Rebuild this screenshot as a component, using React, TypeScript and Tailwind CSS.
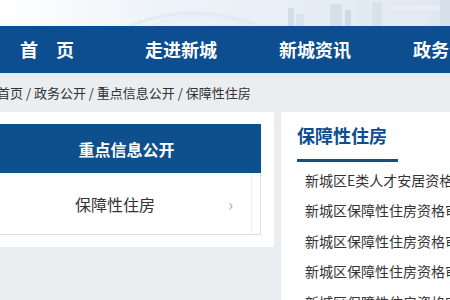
import React from "react";

const font = { fontFamily: '"Noto Sans CJK SC", "Noto Sans", sans-serif' };

function City() {
  return (
    <svg width="450" height="26" viewBox="0 0 450 26" className="absolute left-0 top-0">
      <defs>
        <linearGradient id="fade" x1="0" x2="1" y1="0" y2="0">
          <stop offset="0" stopColor="#ffffff" stopOpacity="1" />
          <stop offset="0.35" stopColor="#eef3f8" stopOpacity="1" />
          <stop offset="1" stopColor="#dfe8f1" stopOpacity="1" />
        </linearGradient>
      </defs>
      <rect x="0" y="0" width="450" height="26" fill="url(#fade)" />
      <path d="M130 26 Q190 0 260 26" stroke="#e3eaf2" strokeWidth="3" fill="none" />
      <path d="M150 26 Q200 6 250 26" stroke="#e8eef4" strokeWidth="2" fill="none" />
      <rect x="288" y="8" width="6" height="18" fill="#d3dde8" />
      <rect x="296" y="14" width="8" height="12" fill="#dbe4ee" />
      <rect x="330" y="4" width="12" height="22" fill="#d6e0ea" />
      <rect x="345" y="10" width="6" height="16" fill="#cfdae6" />
      <rect x="355" y="0" width="14" height="26" fill="#e1e9f1" />
      <rect x="372" y="2" width="10" height="24" fill="#d9e2ec" />
      <rect x="390" y="6" width="50" height="4" fill="#e7eef5" />
      <rect x="398" y="12" width="30" height="14" fill="#e3eaf2" />
      <rect x="440" y="0" width="10" height="26" fill="#d7e1eb" />
    </svg>
  );
}

export default function App() {
  const items = [
    "新城区E类人才安居资格认定名单公示",
    "新城区保障性住房资格审核结果公示",
    "新城区保障性住房资格审核结果公示",
    "新城区保障性住房资格审核结果公示",
    "新城区保障性住房资格审核结果公示",
  ];
  return (
    <div className="w-[450px] h-[300px] overflow-hidden bg-[#ebeef1] flex flex-col" style={font}>
      <div className="relative h-[26px] shrink-0 bg-white">
        <City />
      </div>
      <div className="h-[47px] shrink-0 bg-[#0c4e8f] flex items-center text-white text-[18px] font-bold whitespace-nowrap">
        <div className="flex ml-[-20px]">
          <div className="w-[134px] text-center">首　页</div>
          <div className="w-[134px] text-center">走进新城</div>
          <div className="w-[134px] text-center">新城资讯</div>
          <div className="w-[134px] text-center">政务公开</div>
        </div>
      </div>
      <div className="h-[5px] shrink-0 bg-[#e2ecf4]" />
      <div className="h-[34px] shrink-0 flex items-center pb-[5px] text-[13px] text-[#333] ml-[-3px] whitespace-nowrap">
        首页 / 政务公开 / 重点信息公开 / 保障性住房
      </div>
      <div className="flex flex-1 gap-[7px] min-h-0">
        <div className="w-[274px] shrink-0 self-start bg-white pt-[12px] pb-[12px]">
          <div className="w-[261px] h-[49px] bg-[#0e4f8e] flex items-center justify-center text-white text-[16px] font-bold pr-[8px]">
            重点信息公开
          </div>
          <div className="w-[261px] h-[62px] border-b border-r border-[#dddddd] flex items-center relative">
            <div className="absolute right-[8px] top-0 bottom-0 w-px bg-[#eeeeee]" />
            <div className="w-full text-center text-[16px] text-[#333] pr-[30px]">保障性住房</div>
            <div className="absolute right-[27px] top-[19px] text-[#aaa] text-[16px]">›</div>
          </div>
        </div>
        <div className="flex-1 bg-white pl-[16px] pt-[10px] overflow-hidden">
          <div className="text-[18px] font-bold text-[#0c4e8f] leading-[26px]">保障性住房</div>
          <div className="w-[101px] h-[3px] bg-[#164e7e] mt-[11px]" />
          <div className="pl-[8px] mt-[3px] text-[14px] text-[#333] whitespace-nowrap">
            {items.map((t, i) => (
              <div key={i} className="h-[30.5px] flex items-center">{t}</div>
            ))}
          </div>
        </div>
      </div>
    </div>
  );
}
